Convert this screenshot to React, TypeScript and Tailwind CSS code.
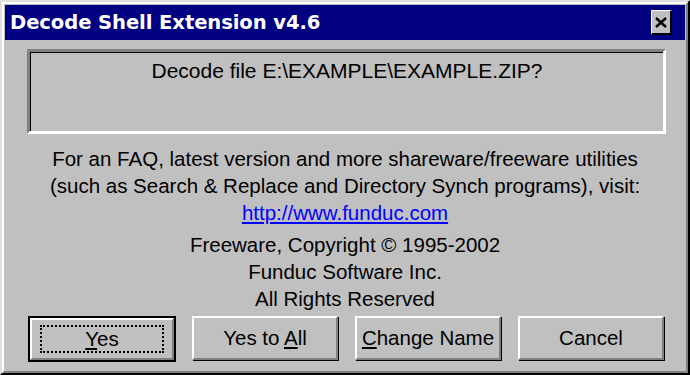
import React from "react";

const font = { fontFamily: '"Liberation Sans", Arial, sans-serif' };

function Btn({ children, def }: { children: React.ReactNode; def?: boolean }) {
  const inner = (
    <div className="w-full h-full border-t-2 border-l-2 border-white border-r-2 border-b-2 border-r-[#808080] border-b-[#808080] flex items-center justify-center shadow-[1px_1px_0_0_#000]">
      {def ? (
        <div className="border-2 border-dotted border-black w-[124px] h-[28px] flex items-center justify-center">
          {children}
        </div>
      ) : (
        children
      )}
    </div>
  );
  return def ? (
    <div className="w-[148px] h-[46px] border-2 border-black bg-[#c0c0c0]">{inner}</div>
  ) : (
    <div className="w-[147px] h-[45px] bg-[#c0c0c0] pr-[1px] pb-[1px]">{inner}</div>
  );
}

export default function App() {
  return (
    <div className="w-[690px] h-[375px] bg-[#c0c0c0] text-black" style={font}>
      <div className="w-full h-full border-l-2 border-t-2 border-[#dfdfdf] border-r-2 border-b-2 border-r-black border-b-black">
        <div className="w-full h-full border-l-2 border-t-2 border-white border-r-2 border-b-2 border-r-[#808080] border-b-[#808080] pt-[1px] pl-[1px] pr-[1px] flex flex-col">
          <div className="h-[35px] bg-[#000080] flex items-center justify-between pl-[5px] pr-[13px]">
            <span
              className="text-white font-bold text-[19.6px] tracking-[-0.1px]"
              style={{ fontFamily: '"DejaVu Sans", Verdana, sans-serif' }}
            >
              Decode Shell Extension v4.6
            </span>
            <div className="w-[21px] h-[25px] bg-[#c0c0c0] border-t border-l border-white border-r-2 border-b-2 border-r-black border-b-black flex items-center justify-center">
              <svg width="12" height="11" viewBox="0 0 12 11">
                <path d="M1 1 L11 10 M11 1 L1 10" stroke="#000" strokeWidth="2.4" />
              </svg>
            </div>
          </div>
          <div className="pl-[22px] pr-[19px] pt-[9px]">
            <div className="h-[85px] border-t-[3px] border-l-[3px] border-[#808080] border-r-[3px] border-b-[3px] border-r-white border-b-white">
              <div className="h-full border-t border-l border-black text-[21px] text-center pt-[4px] leading-[27px]">
                Decode file E:\EXAMPLE\EXAMPLE.ZIP?
              </div>
            </div>
          </div>
          <div className="flex flex-col items-center text-[20.5px] leading-[27px] mt-[11px]">
            <div>For an FAQ, latest version and more shareware/freeware utilities</div>
            <div>(such as Search &amp; Replace and Directory Synch programs), visit:</div>
            <div className="text-[#0000ff] underline">http://www.funduc.com</div>
            <div className="mt-[5px]">Freeware, Copyright © 1995-2002</div>
            <div>Funduc Software Inc.</div>
            <div>All Rights Reserved</div>
          </div>
          <div className="flex pl-[23px] gap-[16px] mt-[4px] text-[20.5px]">
            <Btn def>
              <span>
                <span className="underline">Y</span>es
              </span>
            </Btn>
            <Btn>
              <span>
                Yes to <span className="underline">A</span>ll
              </span>
            </Btn>
            <Btn>
              <span>
                <span className="underline">C</span>hange Name
              </span>
            </Btn>
            <Btn>Cancel</Btn>
          </div>
        </div>
      </div>
    </div>
  );
}
